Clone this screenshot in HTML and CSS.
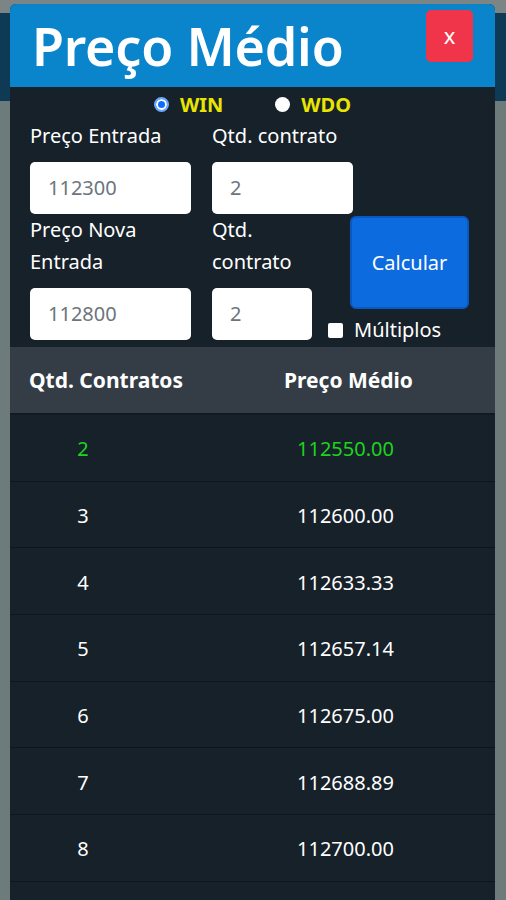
FILE: index.html
```html
<!DOCTYPE html>
<html lang="pt-BR">
<head>
    <meta charset="UTF-8">
    <title>Preço Médio</title>
    <link rel="stylesheet" href="styles.css">
</head>
<body>
<div id="modal">
    <div id="header">
        <h1>Preço Médio</h1>
        <span id="close">x</span>
    </div>
    <div id="ativos">
        <label><span class="radio checked"></span>WIN</label>
        <label><span class="radio"></span>WDO</label>
    </div>
    <div class="linha">
        <div class="campo">
            <p>Preço Entrada</p>
            <div class="input largo">112300</div>
        </div>
        <div class="campo">
            <p>Qtd. contrato</p>
            <div class="input medio">2</div>
        </div>
    </div>
    <div class="linha">
        <div class="campo estreito">
            <p>Preço Nova Entrada</p>
            <div class="input largo">112800</div>
        </div>
        <div class="campo mini">
            <p>Qtd. contrato</p>
            <div class="input curto">2</div>
        </div>
        <div id="acoes">
            <span id="calcular">Calcular</span>
            <label id="multiplos"><span class="check"></span>Múltiplos</label>
        </div>
    </div>
    <div id="tabela">
        <div class="cab">
            <span>Qtd. Contratos</span>
            <span>Preço Médio</span>
        </div>
        <div class="lin verde"><span>2</span><span>112550.00</span></div>
        <div class="lin"><span>3</span><span>112600.00</span></div>
        <div class="lin"><span>4</span><span>112633.33</span></div>
        <div class="lin"><span>5</span><span>112657.14</span></div>
        <div class="lin"><span>6</span><span>112675.00</span></div>
        <div class="lin"><span>7</span><span>112688.89</span></div>
        <div class="lin"><span>8</span><span>112700.00</span></div>
        <div class="lin"><span></span><span></span></div>
    </div>
</div>
</body>
</html>
```

FILE: styles.css
```css
*{
    margin:0;
    padding:0;
    box-sizing: border-box;
}
body{
    height: 900px;
    overflow: hidden;
    font-family: "Noto Sans", "Liberation Sans", sans-serif;
    color: #fff;
    background: linear-gradient(to bottom, #7c8585 13px, #0f3a56 13px, #0f3a56 101px, #6e7b7b 101px);
    padding-top: 4px;
}

#modal{
    width: 485px;
    margin-left: 10px;
    background: #17212a;
    height: 896px;
    overflow: hidden;
    border-radius: 6px 6px 0 0;
}
#header{
    height: 83px;
    background: #0a84cb;
    display: flex;
    justify-content: space-between;
    align-items: flex-start;
    padding: 6px 22px 0 22px;
}
#header h1{
    font-size: 52px;
    font-weight: 600;
    line-height: 72px;
    letter-spacing: -0.2px;
}
#close{
    width: 47px;
    height: 52px;
    background: #f0354b;
    border-radius: 5px;
    font-size: 22px;
    line-height: 50px;
    text-align: center;
}

#ativos{
    display: flex;
    justify-content: center;
    gap: 52px;
    height: 33px;
    align-items: center;
    padding-top: 2px;
}
#ativos label{
    display: flex;
    align-items: center;
    gap: 11px;
    color: #e8e600;
    font-weight: 700;
    font-size: 20px;
}
.radio{
    width: 15px;
    height: 15px;
    border-radius: 50%;
    background: #fff;
}
.radio.checked{
    background: #0d6efd;
    border: 2px solid #6aa8ff;
    box-shadow: inset 0 0 0 2px #fff;
}

.linha{
    display: flex;
    gap: 21px;
    padding-left: 20px;
}
.campo p{
    font-size: 20px;
    line-height: 32px;
    margin-bottom: 10px;
}
.estreito{
    width: 161px;
}
.mini{
    width: 100px;
}
.input{
    height: 52px;
    background: #fff;
    border-radius: 5px;
    color: #6c757d;
    font-size: 20px;
    line-height: 52px;
    padding-left: 18px;
}
.largo{ width: 161px; }
.medio{ width: 141px; }
.curto{ width: 100px; }

#acoes{
    display: flex;
    flex-direction: column;
    margin-left: -5px;
}
#calcular{
    margin: 2px 0 0 22px;
    width: 119px;
    height: 93px;
    background: #0d6be0;
    border: 2px solid #0a58c0;
    border-radius: 6px;
    font-size: 20px;
    line-height: 89px;
    text-align: center;
}
#multiplos{
    display: flex;
    align-items: center;
    gap: 11px;
    font-size: 20px;
    line-height: 20px;
    margin-top: 11px;
}
.check{
    width: 15px;
    height: 15px;
    background: #fff;
    border-radius: 2px;
}

#tabela{
    margin-top: 7px;
}
.cab, .lin{
    display: grid;
    grid-template-columns: 192px 1fr;
    align-items: center;
    text-align: center;
    font-size: 20px;
}
.cab{
    height: 68px;
    background: #343d46;
    font-weight: 700;
    font-size: 21px;
    border-bottom: 2px solid #111a20;
}
.lin{
    height: 66.7px;
    padding-top: 2px;
    border-bottom: 1px solid #0e161c;
}
.lin span:first-child{
    padding-right: 46px;
}
.lin span:last-child{
    padding-right: 6px;
}
.verde{
    color: #1ed31e;
}
```
